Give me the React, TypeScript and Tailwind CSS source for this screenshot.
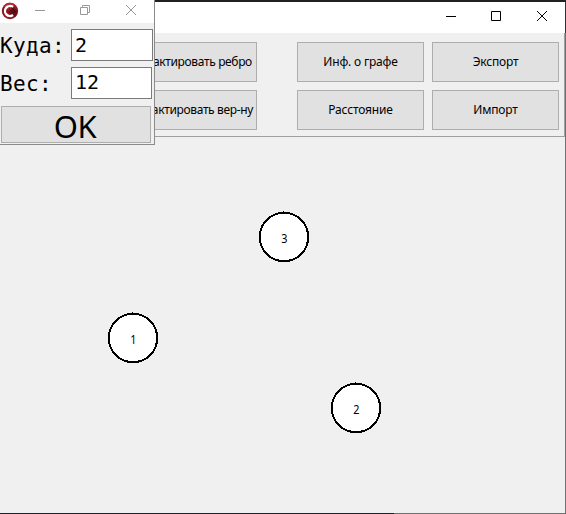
import React from 'react';

function ToolButton({ label, spacing = 'tracking-[-0.18px]' }: { label: string; spacing?: string }) {
  return (
    <button className="flex h-[40px] w-[127px] items-center justify-center overflow-hidden border border-[#adadad] bg-[#e1e1e1] text-[12px] leading-none text-black">
      <span className={'whitespace-nowrap ' + spacing}>{label}</span>
    </button>
  );
}

function Toolbar() {
  return (
    <div className="flex h-[104px] w-[565px] justify-end gap-2 border-r border-b border-[#a0a0a0] pt-[9px] pr-[5px]">
      <div className="mr-[32px] flex flex-col gap-2">
        <ToolButton label="Редактировать ребро" spacing="tracking-[-0.35px] pr-[2px]" />
        <ToolButton label="Редактировать вер-ну" spacing="tracking-[-0.35px] pr-[2px]" />
      </div>
      <div className="flex flex-col gap-2">
        <ToolButton label="Инф. о графе" />
        <ToolButton label="Расстояние" />
      </div>
      <div className="flex flex-col gap-2">
        <ToolButton label="Экспорт" />
        <ToolButton label="Импорт" />
      </div>
    </div>
  );
}

function GraphNode({ label, place }: { label: string; place: string }) {
  return (
    <div className={'absolute h-[51px] w-[51px] ' + place}>
      <svg className="absolute inset-0" width="51" height="51" viewBox="0 0 51 51" shapeRendering="crispEdges">
        <circle cx="25" cy="26" r="24.2" fill="white" stroke="black" strokeWidth="2" />
        <path d="M24 0h1v1h-1z" />
      </svg>
      <span className="relative flex h-full items-center justify-center pt-[4px] pr-[1px] text-[12px] leading-none text-black">
        <span className="scale-x-90">{label}</span>
      </span>
    </div>
  );
}

function Logo() {
  return (
    <svg width="18" height="18" viewBox="0 0 18 18">
      <circle cx="9" cy="9" r="8.2" fill="#8f1820" />
      <path d="M2.5 4A8.2 8.2 0 0 1 14 2.5L9 9z" fill="#b92a32" />
      <path d="M10 4.5l5.8 3.5v5L12 15.5z" fill="#651018" />
      <path d="M12 5A5 5 0 1 0 12 13" fill="none" stroke="white" strokeWidth="2.3" />
      <path d="M8 6.5l4 5M10.5 5.5l4 5M8 9.5l2 2.5" stroke="#3f0a10" strokeWidth="1.1" />
    </svg>
  );
}

function Field({ label, value, input }: { label: string; value: string; input: string }) {
  return (
    <div className="flex h-[32px] items-start font-['DejaVu_Sans_Mono','Liberation_Mono',monospace] text-[21px] text-black">
      <span className="w-[71px] shrink-0 whitespace-nowrap pt-[5px] leading-[24px] tracking-[0.35px]">{label}</span>
      <div className={'flex h-[32px] items-center border border-[#7a7a7a] bg-white pl-[3px] text-[20px] leading-none ' + input}>{value}</div>
    </div>
  );
}

function Dialog() {
  return (
    <div className="absolute top-0 left-0 h-[145px] w-[155px] border-r border-b border-[#8b8b8b] bg-[#f0f0f0]">
      <div className="flex h-[23px] bg-white pt-[2px] pl-[1px]">
        <Logo />
        <svg className="ml-[13px]" width="114" height="18" viewBox="0 0 114 18" fill="none" stroke="#999999">
          <path d="M3 8.5h10M48.5 5.5h7v7h-7zM50.5 5.5v-2h7v7h-2" />
          <path d="M94 3l10 10M104 3L94 13" />
        </svg>
      </div>
      <div className="flex flex-col gap-[6px] pt-[6px]">
        <Field label="Куда:" value="2" input="w-[82px]" />
        <Field label="Вес:" value="12" input="w-[81px] pb-[2px]" />
      </div>
      <button className="mt-[7px] ml-[1px] flex h-[37px] w-[150px] items-center justify-center border border-[#adadad] bg-[#e1e1e1] pt-[4px] pr-[2px] text-[31px] leading-none tracking-[-0.5px] text-black">
        OK
      </button>
    </div>
  );
}

export default function App() {
  return (
    <div className="relative flex h-[514px] w-[566px] flex-col overflow-hidden bg-[#f0f0f0] font-['Noto_Sans','Open_Sans',sans-serif]">
      <div className="h-[2px] shrink-0 bg-[#1f2124]" />
      <div className="flex h-[31px] shrink-0 justify-end border-r border-[#303236] bg-white">
        <svg width="125" height="30" viewBox="440 2 125 30" fill="none" stroke="black">
          <path d="M446 16.5h10M491.5 11.5h9v9h-9z" />
          <path d="M537 11l10 10M547 11l-10 10" />
        </svg>
      </div>
      <div className="shrink-0 border-r border-[#707070]">
        <Toolbar />
      </div>
      <div className="flex-1 border-r border-[#707070]" />
      <div className="flex h-px shrink-0 bg-[#707070]">
        <div className="w-[394px] bg-[#202124]" />
      </div>
      <GraphNode label="3" place="top-[211px] left-[259px]" />
      <GraphNode label="1" place="top-[312px] left-[108px]" />
      <GraphNode label="2" place="top-[382px] left-[331px]" />
      <Dialog />
    </div>
  );
}
